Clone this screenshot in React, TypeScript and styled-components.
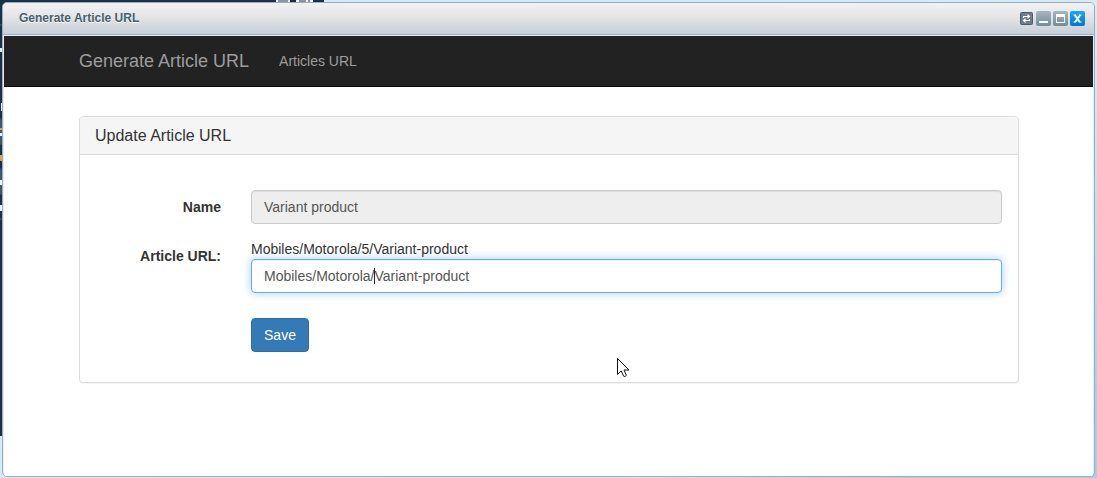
import React from "react";
import styled, { createGlobalStyle, css } from "styled-components";

const GlobalStyle = createGlobalStyle`
  *, *::before, *::after { box-sizing: border-box; }
  body {
    margin: 0;
    font: 14px/20px "Liberation Sans", Arial, sans-serif;
    color: #333;
  }
  button, input { font: inherit; }
`;

const Desktop = styled.div`
  position: relative;
  display: flex;
  min-height: 100vh;
  padding: 2px 2px 1px;
  background:
    linear-gradient(#1e3049, #1e3049) 0 0 / 324px 436px no-repeat,
    linear-gradient(100deg, #d3ebf5 0%, #cfeaf5 60%, transparent 85%),
    linear-gradient(#d3ebf5 10%, #a9c9ef 90%);
`;

const Behind = styled.svg`
  position: absolute;
  top: 0;
  left: 0;
`;

const Window = styled.section`
  position: relative;
  flex: 1;
  min-width: 0;
  display: flex;
  flex-direction: column;
  border: 1px solid #99afbf;
  border-radius: 5px;
  background: #e3edf3;
  overflow: hidden;
`;

const TitleBar = styled.header`
  display: flex;
  justify-content: space-between;
  align-items: center;
  height: 32px;
  padding: 0 9px 0 16px;
  border-bottom: 1px solid #9fb4c0;
  background: linear-gradient(#f1f1f1, #e3e5e7 45%, #c5ced8);
`;

const WindowTitle = styled.h1`
  margin: 0;
  padding-bottom: 2px;
  font-size: 12px;
  line-height: 16px;
  font-weight: bold;
  color: #465f6e;
  text-shadow: 0 1px 0 #fff;
`;

const Tools = styled.div`
  display: flex;
  gap: 2px;
`;

const Tool = styled.button`
  display: block;
  width: 15px;
  height: 15px;
  padding: 0;
  border: 0;
  background: none;
  svg { display: block; }
`;

const Content = styled.div`
  flex: 1;
  margin: 1px 1px 0;
  background: #fff;
`;

const Navbar = styled.nav`
  height: 51px;
  border-bottom: 1px solid #080808;
  background: #222;
`;

const Container = styled.div`
  max-width: 971px;
  margin: 0 auto;
  padding: 0 15px 0 16px;
`;

const NavRow = styled(Container)`
  display: flex;
  gap: 30px;
`;

const NavLink = styled.a<{ $brand?: boolean }>`
  padding: 15px 0;
  font-size: ${(p) => (p.$brand ? 18 : 14)}px;
  line-height: 20px;
  color: #9d9d9d;
  text-decoration: none;
  white-space: nowrap;
`;

const Panel = styled.section`
  margin: 29px 0 20px;
  border: 1px solid #ddd;
  border-radius: 4px;
  background: #fff;
  box-shadow: 0 1px 1px rgba(0, 0, 0, 0.05);
`;

const PanelHeading = styled.h2`
  margin: 0;
  padding: 10px 15px 9px;
  border-bottom: 1px solid #ddd;
  border-radius: 3px 3px 0 0;
  background: #f5f5f5;
  font-size: 16px;
  line-height: 18px;
  font-weight: normal;
`;

const Form = styled.form`
  display: grid;
  grid-template-columns: 141px minmax(0, 1fr);
  gap: 15px 30px;
  padding: 35px 16px 30px 0;
`;

const Label = styled.label`
  padding-top: 7px;
  font-weight: bold;
  text-align: right;
`;

const Field = styled.div`
  position: relative;
`;

const Hint = styled.div`
  line-height: 20px;
`;

const Input = styled.input<{ $active?: boolean }>`
  display: block;
  width: 100%;
  height: 34px;
  padding: 6px 12px;
  border: 1px solid #ccc;
  border-radius: 4px;
  outline: 0;
  background: #fff;
  color: #555;
  box-shadow: inset 0 1px 1px rgba(0, 0, 0, 0.075);
  &:read-only { background: #eee; }
  ${(p) =>
    p.$active &&
    css`
      border-color: #66afe9;
      box-shadow: inset 0 1px 1px rgba(0, 0, 0, 0.075), 0 0 8px rgba(102, 175, 233, 0.6);
    `}
`;

const Caret = styled.span`
  position: absolute;
  left: 123px;
  bottom: 9px;
  width: 1px;
  height: 16px;
  background: #222;
`;

const Actions = styled.div`
  grid-column: 2;
  padding-top: 10px;
`;

const SaveButton = styled.button`
  display: block;
  min-width: 58px;
  padding: 6px 12px;
  border: 1px solid #2e6da4;
  border-radius: 4px;
  background: #337ab7;
  color: #fff;
`;

const Pointer = styled.svg`
  position: absolute;
  left: 617px;
  top: 358px;
  pointer-events: none;
`;

function ToolArt({ kind }: { kind: "swap" | "min" | "max" | "close" }) {
  const fill = kind === "close" ? "url(#toolBlue)" : "url(#toolGrey)";
  return (
    <svg width="15" height="15" viewBox="0 0 15 15" aria-hidden="true">
      <defs>
        <linearGradient id="toolGrey" x1="0" y1="0" x2="0" y2="1">
          <stop offset="0" stopColor="#a5b5c0" />
          <stop offset="1" stopColor="#758b99" />
        </linearGradient>
        <linearGradient id="toolBlue" x1="0" y1="0" x2="0" y2="1">
          <stop offset="0" stopColor="#19a8f5" />
          <stop offset="1" stopColor="#0275d0" />
        </linearGradient>
      </defs>
      {kind === "swap" ? (
        <>
          <rect x="1.5" y="1.5" width="12" height="12" rx="1" fill="#6c7d8c" stroke="#4b5d6d" />
          <path d="M4.5 7V5.5H9M10.5 8v1.5H6" fill="none" stroke="#fff" strokeWidth="1.2" />
          <path d="M8.5 3l3 2.5-3 2.5zM6.500 7l-3 2.500 3 2.500z" fill="#fff" />
        </>
      ) : (
        <rect width="15" height="15" rx="2" fill={fill} />
      )}
      {kind === "min" && <path d="M3 10h9v2H3z" fill="#fff" />}
      {kind === "max" && (
        <path d="M3 3h9v9H3zM4 6v5h7V6z" fill="#fff" fillRule="evenodd" />
      )}
      {kind === "close" && (
        <>
          <path d="M4.800 4l5 7M10.200 4l-5 7" stroke="#fff" strokeWidth="2" />
          <path d="M3.500 4h2.500M9 4h2.500M3.500 11h2.500M9 11h2.500" stroke="#fff" strokeWidth="1" />
        </>
      )}
    </svg>
  );
}

export default function App() {
  return (
    <>
      <GlobalStyle />
      <Desktop>
        <Behind width="324" height="436" aria-hidden="true">
          <path d="M0 25h2M0 119h2M0 144h2M0 169h2M0 194h2M0 219h2" stroke="#4a6076" />
          <path d="M0 120h2v24H0zM0 170h2v24H0z" fill="#43566a" />
          <path d="M0 48h2v4H0zM1 103h1v8H1zM0 133h2v3H0zM0 180h2v5H0zM0 205h2v6H0z" fill="#e6f5ff" />
          <path d="M0 128h2v2H0zM0 155h2v6H0z" fill="#dda638" />
          <path d="M276 0h14v2h-14zM296 0h17v2h-17z" fill="#f1f3f5" />
          <path d="M278 1h10M299 1h7M309 0v2" stroke="#283544" />
        </Behind>
        <Window>
          <TitleBar>
            <WindowTitle>Generate Article URL</WindowTitle>
            <Tools>
              <Tool type="button" aria-label="Reload"><ToolArt kind="swap" /></Tool>
              <Tool type="button" aria-label="Minimize"><ToolArt kind="min" /></Tool>
              <Tool type="button" aria-label="Maximize"><ToolArt kind="max" /></Tool>
              <Tool type="button" aria-label="Close"><ToolArt kind="close" /></Tool>
            </Tools>
          </TitleBar>
          <Content>
            <Navbar>
              <NavRow>
                <NavLink href="#" $brand>Generate Article URL</NavLink>
                <NavLink href="#articles">Articles URL</NavLink>
              </NavRow>
            </Navbar>
            <Container>
              <Panel>
                <PanelHeading>Update Article URL</PanelHeading>
                <Form onSubmit={(e) => e.preventDefault()}>
                  <Label htmlFor="name">Name</Label>
                  <Field>
                    <Input id="name" defaultValue="Variant product" readOnly />
                  </Field>
                  <Label htmlFor="url">Article URL:</Label>
                  <Field>
                    <Hint>Mobiles/Motorola/5/Variant-product</Hint>
                    <Input id="url" defaultValue="Mobiles/Motorola/Variant-product" $active />
                    <Caret />
                  </Field>
                  <Actions>
                    <SaveButton type="submit">Save</SaveButton>
                  </Actions>
                </Form>
              </Panel>
            </Container>
          </Content>
        </Window>
        <Pointer width="13" height="20" viewBox="0 0 13 20" aria-hidden="true">
          <path
            d="M.5.5v16l3.7-3.6 2.4 5.2q.3.7 1 .4l1.200-.5q.7-.3.4-1L7 12h5z"
            fill="#fff"
            stroke="#111"
          />
        </Pointer>
      </Desktop>
    </>
  );
}
